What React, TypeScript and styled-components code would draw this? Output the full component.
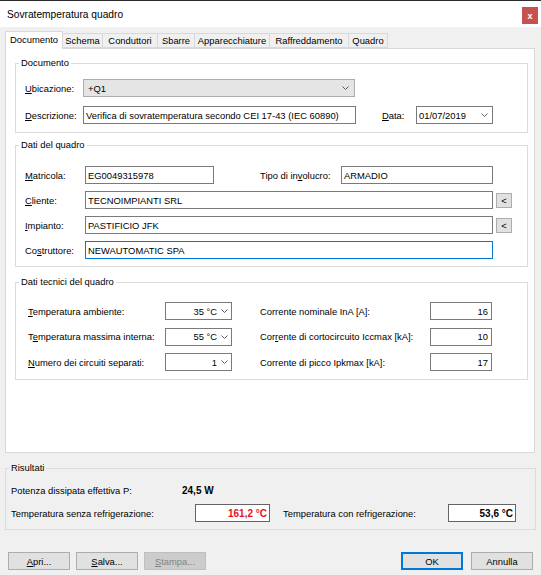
import React from 'react';
import styled, { createGlobalStyle } from 'styled-components';

const GlobalStyle = createGlobalStyle`
  html, body {
    margin: 0;
    padding: 0;
    background: #f0f0f0;
  }
  body {
    font-family: 'Liberation Sans', Arial, sans-serif;
    font-size: 9.4px;
    color: #000;
  }
`;

const colors = {
  face: '#f0f0f0',
  white: '#ffffff',
  tabBorder: '#d9d9d9',
  groupBorder: '#dcdcdc',
  inputBorder: '#7a7a7a',
  buttonFace: '#e1e1e1',
  buttonBorder: '#adadad',
  accent: '#0078d7',
  red: '#e81123',
};

const tabs = [
  { name: 'Documento', width: 58 },
  { name: 'Schema', width: 40 },
  { name: 'Conduttori', width: 55 },
  { name: 'Sbarre', width: 37 },
  { name: 'Apparecchiature', width: 75 },
  { name: 'Raffreddamento', width: 79 },
  { name: 'Quadro', width: 39 },
];

function Chevron() {
  return (
    <svg width="7" height="4" viewBox="0 0 7 4">
      <polyline points="0.5,0.5 3.5,3.5 6.5,0.5" fill="none" stroke="#5c5c5c" strokeWidth="1" />
    </svg>
  );
}

function App() {
  return (
    <>
      <GlobalStyle />
      <Window>
        <TitleBar>
          <span>Sovratemperatura quadro</span>
          <CloseButton>x</CloseButton>
        </TitleBar>

        <Content>
          <TabStrip>
            {tabs.map((t, i) => (
              <Tab key={t.name} $width={t.width} $active={i === 0}>
                {t.name}
              </Tab>
            ))}
          </TabStrip>

          <Panel>
            <Group>
              <Legend>Documento</Legend>
              <GroupBody $pt={10} $pb={8} $pl={9} $gap={9}>
                <Row>
                  <Label $width={58}>
                    <u>U</u>bicazione:
                  </Label>
                  <Combo $width={272}>
                    <span>+Q1</span>
                    <Chevron />
                  </Combo>
                </Row>
                <Row>
                  <Label $width={58}>
                    <u>D</u>escrizione:
                  </Label>
                  <Field $width={273}>Verifica di sovratemperatura secondo CEI 17-43 (IEC 60890)</Field>
                  <Label $width={34} $ml={26}>
                    <u>D</u>ata:
                  </Label>
                  <DateBox $width={77}>
                    <span>01/07/2019</span>
                    <Chevron />
                  </DateBox>
                </Row>
              </GroupBody>
            </Group>

            <Group $mt={6}>
              <Legend>Dati del quadro</Legend>
              <GroupBody $pt={15} $pb={7} $pl={9} $gap={7}>
                <Row>
                  <Label $width={60}>
                    <u>M</u>atricola:
                  </Label>
                  <Field $width={129}>EG0049315978</Field>
                  <Label $width={81} $ml={46}>
                    Tipo di in<u>v</u>olucro:
                  </Label>
                  <Field $width={152}>ARMADIO</Field>
                </Row>
                <Row>
                  <Label $width={60}>
                    <u>C</u>liente:
                  </Label>
                  <Field $width={408}>TECNOIMPIANTI SRL</Field>
                  <SmallButton>&lt;</SmallButton>
                </Row>
                <Row>
                  <Label $width={60}>
                    <u>I</u>mpianto:
                  </Label>
                  <Field $width={408}>PASTIFICIO JFK</Field>
                  <SmallButton>&lt;</SmallButton>
                </Row>
                <Row>
                  <Label $width={60}>
                    Co<u>s</u>truttore:
                  </Label>
                  <Field $width={408} $focused>
                    NEWAUTOMATIC SPA
                  </Field>
                </Row>
              </GroupBody>
            </Group>

            <Group $mt={9}>
              <Legend>Dati tecnici del quadro</Legend>
              <GroupBody $pt={14} $pb={8} $pl={12} $gap={7.5}>
                <Row>
                  <Label $width={137}>
                    <u>T</u>emperatura ambiente:
                  </Label>
                  <NumberCombo>
                    <span>35 °C</span>
                    <Chevron />
                  </NumberCombo>
                  <Label $width={170} $ml={28}>
                    Corrente nominale InA [A]:
                  </Label>
                  <NumberField>16</NumberField>
                </Row>
                <Row>
                  <Label $width={137}>
                    T<u>e</u>mperatura massima interna:
                  </Label>
                  <NumberCombo>
                    <span>55 °C</span>
                    <Chevron />
                  </NumberCombo>
                  <Label $width={170} $ml={28}>
                    Cor<u>r</u>ente di cortocircuito Iccmax [kA]:
                  </Label>
                  <NumberField>10</NumberField>
                </Row>
                <Row>
                  <Label $width={137}>
                    <u>N</u>umero dei circuiti separati:
                  </Label>
                  <NumberCombo>
                    <span>1</span>
                    <Chevron />
                  </NumberCombo>
                  <Label $width={170} $ml={28}>
                    Corrente di picco Ipkmax [kA]:
                  </Label>
                  <NumberField>17</NumberField>
                </Row>
              </GroupBody>
            </Group>
          </Panel>

          <Group $mt={9}>
            <Legend>Risultati</Legend>
            <GroupBody $pt={7} $pb={7} $pl={5} $gap={5}>
              <Row>
                <Label $width={171}>Potenza dissipata effettiva P:</Label>
                <Strong>24,5 W</Strong>
              </Row>
              <Row>
                <Label $width={184}>Temperatura senza refrigerazione:</Label>
                <ResultBox $width={75} $alert>
                  161,2 °C
                </ResultBox>
                <Label $width={165} $ml={13}>
                  Temperatura con refrigerazione:
                </Label>
                <ResultBox $width={68}>53,6 °C</ResultBox>
              </Row>
            </GroupBody>
          </Group>

          <ButtonBar>
            <ButtonGroup>
              <Button>
                <u>A</u>pri...
              </Button>
              <Button>
                <u>S</u>alva...
              </Button>
              <Button disabled>
                <u>S</u>tampa...
              </Button>
            </ButtonGroup>
            <ButtonGroup>
              <Button $default>OK</Button>
              <Button>Annulla</Button>
            </ButtonGroup>
          </ButtonBar>
        </Content>
      </Window>
    </>
  );
}

const Window = styled.div`
  width: 541px;
  height: 575px;
  box-sizing: border-box;
  background: ${colors.face};
  border-top: 1px solid #2b2b2b;
  display: flex;
  flex-direction: column;
  overflow: hidden;
`;

const TitleBar = styled.div`
  height: 26px;
  flex: none;
  background: ${colors.white};
  display: flex;
  align-items: center;
  justify-content: space-between;
  padding: 0 3px 0 7px;
  font-size: 10.2px;
`;

const CloseButton = styled.div`
  width: 16px;
  height: 17px;
  margin-top: 3px;
  background: #c75050;
  color: #fff;
  font-size: 9px;
  font-weight: bold;
  display: flex;
  align-items: center;
  justify-content: center;
`;

const Content = styled.div`
  padding: 4px 5px 0 5px;
  display: flex;
  flex-direction: column;
`;

const TabStrip = styled.div`
  display: flex;
  align-items: flex-end;
  height: 17px;
  position: relative;
  z-index: 1;
`;

const Tab = styled.div<{ $width: number; $active?: boolean }>`
  width: ${(p) => p.$width}px;
  height: ${(p) => (p.$active ? 18 : 15)}px;
  margin-bottom: ${(p) => (p.$active ? -1 : 0)}px;
  box-sizing: border-box;
  border: 1px solid ${colors.tabBorder};
  border-bottom: ${(p) => (p.$active ? 'none' : `1px solid ${colors.tabBorder}`)};
  border-left-width: ${(p) => (p.$active ? 1 : 0)}px;
  background: ${(p) => (p.$active ? colors.white : colors.face)};
  display: flex;
  align-items: ${(p) => (p.$active ? 'flex-start' : 'center')};
  padding-top: ${(p) => (p.$active ? 2 : 0)}px;
  justify-content: center;
  white-space: nowrap;
`;

const Panel = styled.div`
  width: 530px;
  height: 405px;
  box-sizing: border-box;
  background: ${colors.white};
  border: 1px solid ${colors.tabBorder};
  padding: 8px 6px 0 9px;
`;

const Group = styled.fieldset<{ $mt?: number }>`
  margin: ${(p) => p.$mt || 0}px 0 0 0;
  padding: 0;
  min-width: 0;
  border: 1px solid ${colors.groupBorder};
`;

const Legend = styled.legend`
  margin-left: 3px;
  padding: 0 2px;
  line-height: 12px;
  height: 12px;
`;

const GroupBody = styled.div<{ $pt: number; $pb: number; $pl: number; $gap: number }>`
  display: flex;
  flex-direction: column;
  gap: ${(p) => p.$gap}px;
  padding: ${(p) => p.$pt}px 0 ${(p) => p.$pb}px ${(p) => p.$pl}px;
`;

const Row = styled.div`
  display: flex;
  align-items: center;
  height: 18px;
`;

const Label = styled.div<{ $width: number; $ml?: number }>`
  width: ${(p) => p.$width}px;
  margin-left: ${(p) => p.$ml || 0}px;
  flex: none;
  white-space: nowrap;
`;

const Field = styled.div<{ $width: number; $focused?: boolean }>`
  width: ${(p) => p.$width}px;
  height: 18px;
  box-sizing: border-box;
  flex: none;
  border: 1px solid ${(p) => (p.$focused ? colors.accent : colors.inputBorder)};
  background: ${colors.white};
  padding: 0 2px;
  display: flex;
  align-items: center;
  white-space: nowrap;
  overflow: hidden;
`;

const Combo = styled.div<{ $width: number }>`
  width: ${(p) => p.$width}px;
  height: 18px;
  box-sizing: border-box;
  flex: none;
  border: 1px solid ${colors.buttonBorder};
  background: #e5e5e5;
  padding: 0 5px 0 4px;
  display: flex;
  align-items: center;
  justify-content: space-between;
`;

const DateBox = styled(Combo)`
  background: ${colors.white};
  border-color: ${colors.inputBorder};
  padding: 0 4px 0 2px;
`;

const NumberCombo = styled.div`
  width: 67px;
  height: 18px;
  box-sizing: border-box;
  flex: none;
  border: 1px solid ${colors.inputBorder};
  background: ${colors.white};
  padding: 0 3px 0 0;
  display: flex;
  align-items: center;
  justify-content: flex-end;
  gap: 4px;
`;

const NumberField = styled.div`
  width: 62px;
  height: 18px;
  box-sizing: border-box;
  flex: none;
  border: 1px solid ${colors.inputBorder};
  background: ${colors.white};
  padding: 0 3px 0 0;
  display: flex;
  align-items: center;
  justify-content: flex-end;
`;

const SmallButton = styled.div`
  width: 16px;
  height: 15px;
  box-sizing: border-box;
  flex: none;
  margin-left: 3px;
  border: 1px solid ${colors.buttonBorder};
  background: ${colors.buttonFace};
  display: flex;
  align-items: center;
  justify-content: center;
`;

const Strong = styled.div`
  font-weight: bold;
  font-size: 10px;
`;

const ResultBox = styled.div<{ $width: number; $alert?: boolean }>`
  width: ${(p) => p.$width}px;
  height: 18px;
  box-sizing: border-box;
  flex: none;
  border: 1px solid #646464;
  background: ${colors.white};
  padding: 0 2px 0 0;
  display: flex;
  align-items: center;
  justify-content: flex-end;
  font-weight: bold;
  font-size: 10px;
  color: ${(p) => (p.$alert ? colors.red : '#000')};
`;

const ButtonBar = styled.div`
  display: flex;
  justify-content: space-between;
  margin: 22px 3px 0 3px;
`;

const ButtonGroup = styled.div`
  display: flex;
  gap: 6px;
  &:last-child {
    gap: 8px;
  }
`;

const Button = styled.button<{ $default?: boolean }>`
  width: 62px;
  height: 18px;
  box-sizing: border-box;
  padding: 0;
  margin: 0;
  font-family: inherit;
  font-size: 9.4px;
  color: #000;
  background: ${colors.buttonFace};
  border: 1px solid ${(p) => (p.$default ? colors.accent : colors.buttonBorder)};
  box-shadow: ${(p) => (p.$default ? `inset 0 0 0 1px ${colors.accent}` : 'none')};
  &:disabled {
    background: #cccccc;
    border-color: #bfbfbf;
    color: #838383;
  }
`;

export default App;
